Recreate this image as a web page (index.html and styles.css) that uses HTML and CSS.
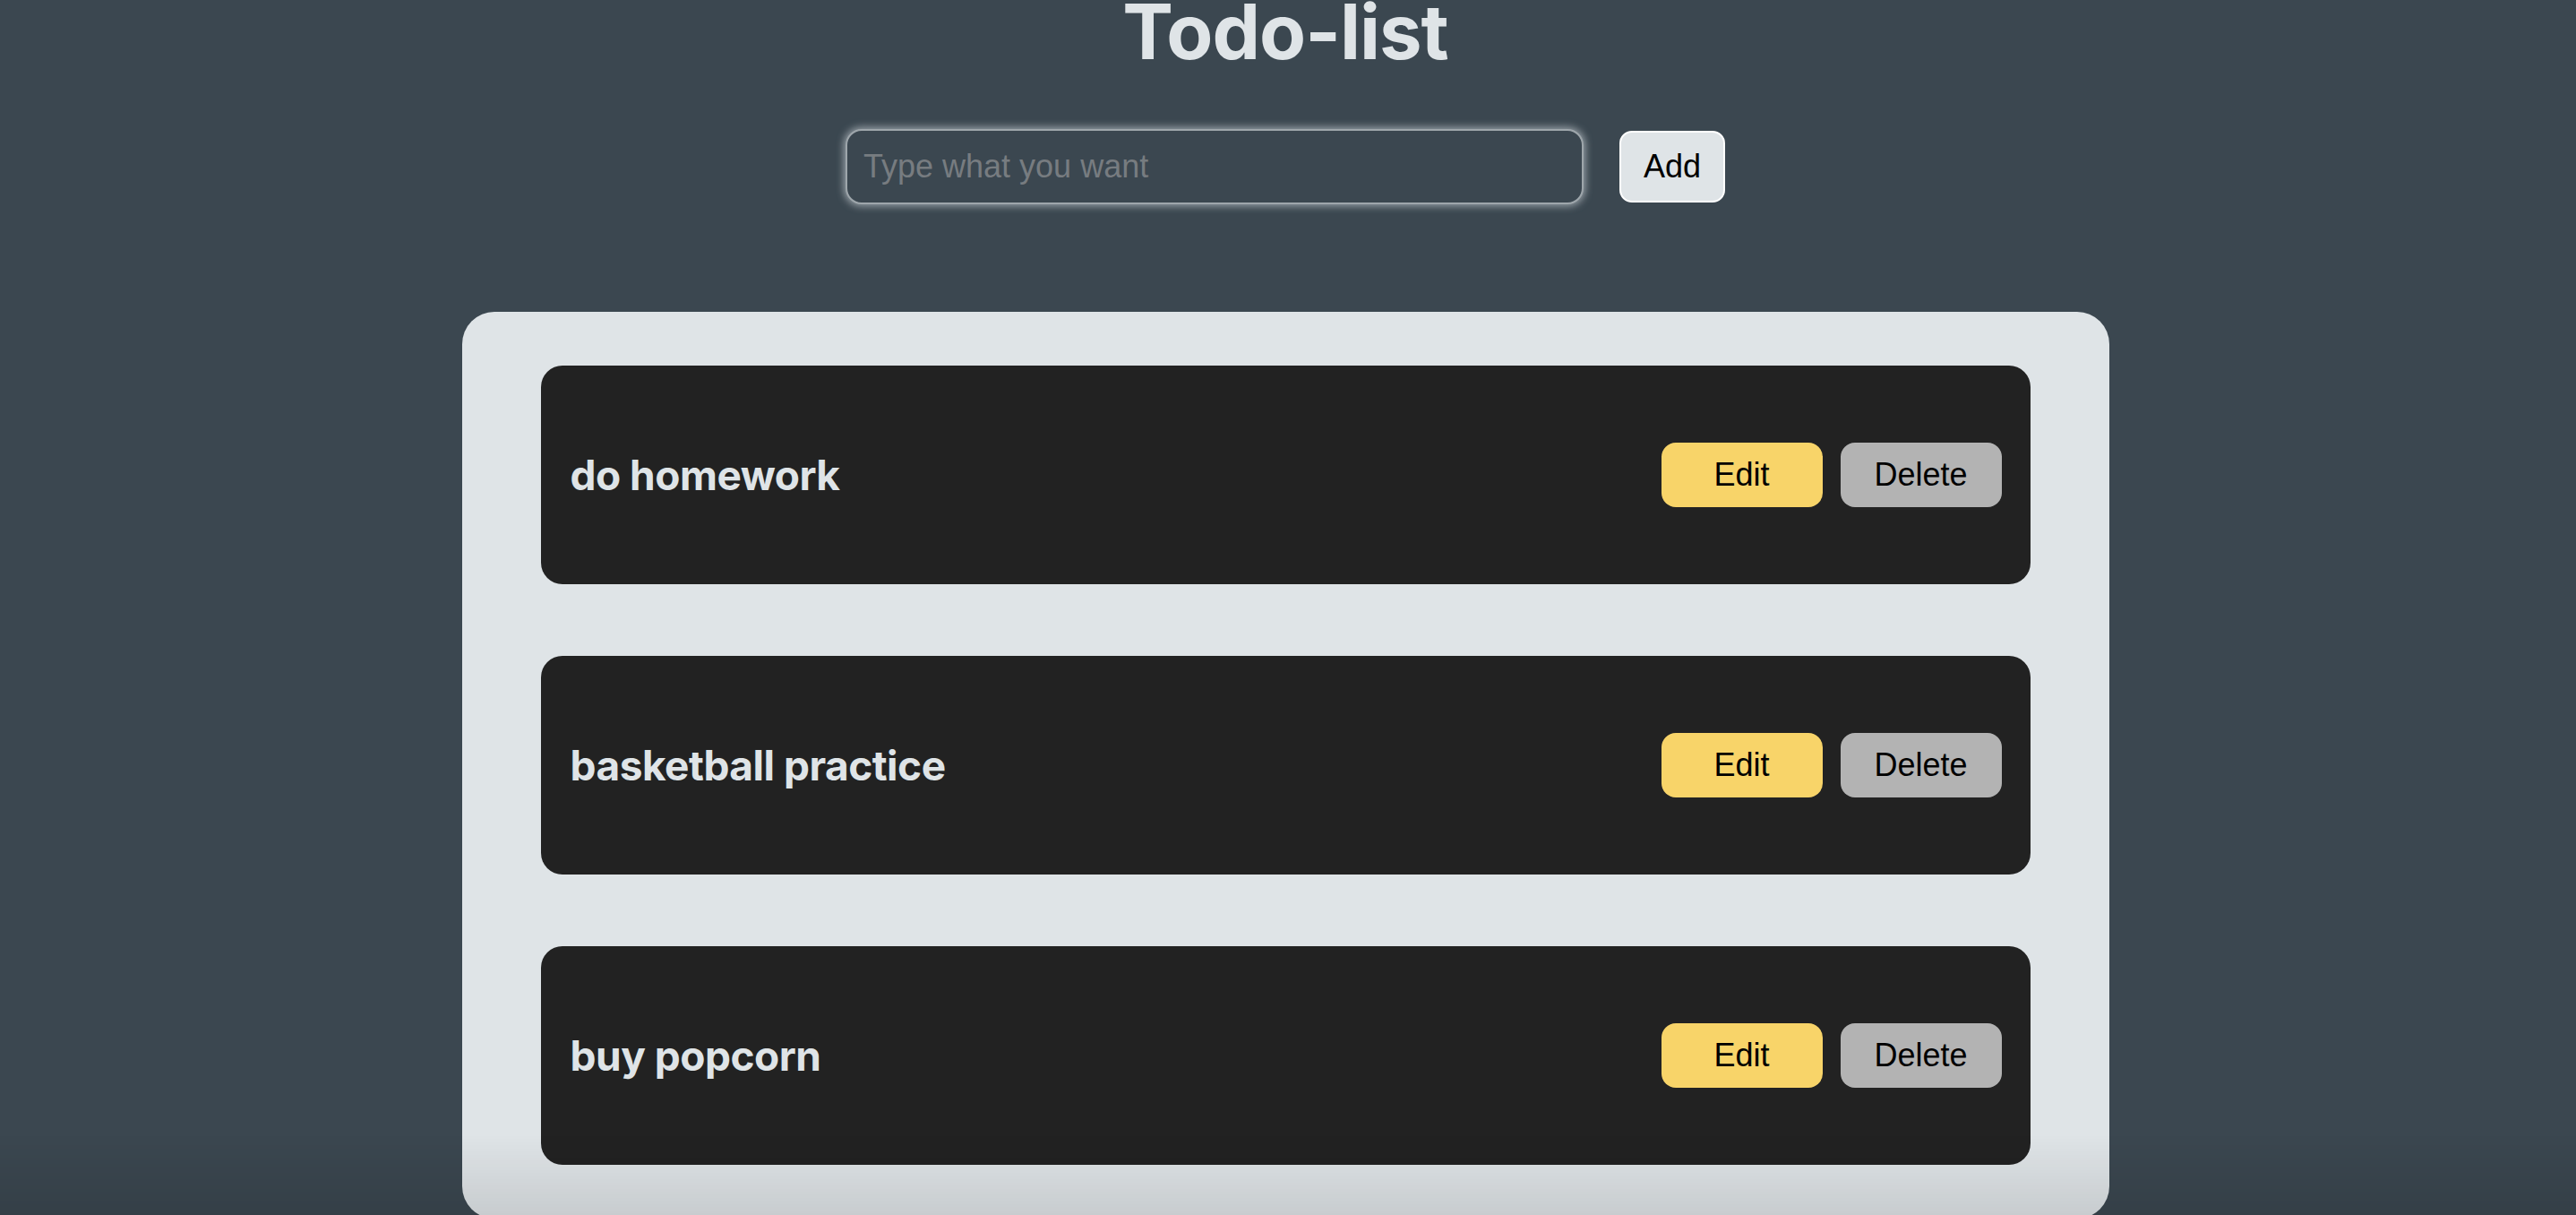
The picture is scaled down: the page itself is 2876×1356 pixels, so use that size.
FILE: index.html
```html
<!DOCTYPE html>
<html lang="en">
<head>
<meta charset="utf-8">
<title>Todo-list</title>
<link rel="stylesheet" href="styles.css">
</head>
<body>
<h1 class="title">Todo-list</h1>
<form class="add-form">
  <input class="add-input" type="text" placeholder="Type what you want">
  <button class="add-btn" type="button">Add</button>
</form>
<div class="list">
  <div class="task">
    <span class="task-name">do homework</span>
    <div class="actions">
      <button class="btn edit" type="button">Edit</button>
      <button class="btn delete" type="button">Delete</button>
    </div>
  </div>
  <div class="task">
    <span class="task-name">basketball practice</span>
    <div class="actions">
      <button class="btn edit" type="button">Edit</button>
      <button class="btn delete" type="button">Delete</button>
    </div>
  </div>
  <div class="task">
    <span class="task-name">buy popcorn</span>
    <div class="actions">
      <button class="btn edit" type="button">Edit</button>
      <button class="btn delete" type="button">Delete</button>
    </div>
  </div>
</div>
<div class="vignette"></div>
</body>
</html>
```

FILE: styles.css
```css
html, body {
  margin: 0;
  padding: 0;
}
body {
  background: #3b4750;
  font-family: "Liberation Sans", Arial, sans-serif;
  overflow: hidden;
  height: 1356px;
  padding-right: 6px;
}
.title {
  margin: -7px 0 0;
  font-family: Inter, "Noto Sans", sans-serif;
  font-weight: 700;
  font-size: 85px;
  line-height: 1;
  color: #dfe4e7;
  text-align: center;
  letter-spacing: -1px;
}
.add-form {
  display: flex;
  justify-content: center;
  align-items: center;
  gap: 40px;
  margin-top: 66px;
}
.add-input {
  box-sizing: border-box;
  width: 824px;
  height: 84px;
  padding: 0 18px;
  background: #3b4750;
  border: 2px solid #9ea6ab;
  border-radius: 18px;
  box-shadow: 0 0 8px 2px rgba(230, 236, 240, 0.55);
  font-family: "Liberation Sans", Arial, sans-serif;
  font-size: 36px;
  color: #dfe4e7;
  outline: none;
}
.add-input::placeholder {
  color: #777c80;
}
.add-btn {
  box-sizing: border-box;
  width: 118px;
  height: 80px;
  background: #dfe4e7;
  border: 2px solid #ffffff;
  border-radius: 14px;
  font-family: "Liberation Sans", Arial, sans-serif;
  font-size: 36px;
  color: #000;
  padding: 0;
}
.list {
  box-sizing: border-box;
  width: 1839px;
  margin: 120px auto 0;
  padding: 60px 88px;
  background: #dfe4e7;
  border-radius: 36px;
  display: flex;
  flex-direction: column;
  gap: 80px;
}
.task {
  box-sizing: border-box;
  height: 244px;
  background: #222222;
  border-radius: 24px;
  padding: 0 32px 0 33px;
  display: flex;
  align-items: center;
  justify-content: space-between;
}
.task-name {
  font-family: Inter, "Noto Sans", sans-serif;
  font-weight: 700;
  font-size: 46px;
  color: #dfe4e7;
  letter-spacing: -0.5px;
}
.actions {
  display: flex;
  gap: 20px;
}
.btn {
  width: 180px;
  height: 72px;
  border: none;
  border-radius: 16px;
  font-family: "Liberation Sans", Arial, sans-serif;
  font-size: 36px;
  color: #000;
  padding: 0;
}
.edit {
  background: #f8d469;
}
.delete {
  background: #b3b3b3;
}
.vignette {
  position: fixed;
  left: 0;
  right: 0;
  bottom: 0;
  height: 90px;
  background: linear-gradient(to bottom, rgba(0, 0, 0, 0), rgba(0, 0, 0, 0.1));
  pointer-events: none;
}
```
